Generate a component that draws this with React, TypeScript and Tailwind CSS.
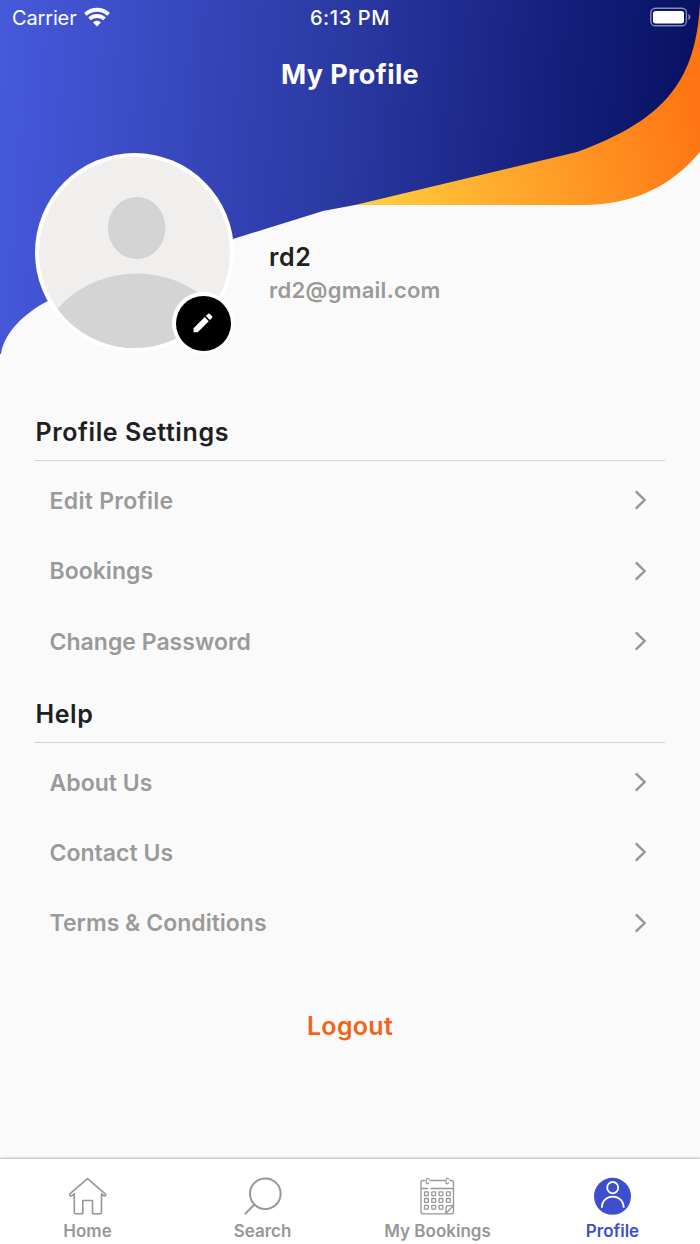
import { ReactNode } from "react";

const settings = ["Edit Profile", "Bookings", "Change Password"];
const help = ["About Us", "Contact Us", "Terms & Conditions"];

function HeaderWave() {
  return (
    <svg className="absolute top-0 left-0" width="700" height="360" viewBox="0 0 700 360" fill="none">
      <defs>
        <linearGradient id="blue" gradientUnits="userSpaceOnUse" x1="0" y1="60" x2="700" y2="110">
          <stop stopColor="#4659db" />
          <stop offset="0.5" stopColor="#2a38a1" />
          <stop offset="0.8" stopColor="#141f7b" />
          <stop offset="1" stopColor="#071162" />
        </linearGradient>
        <linearGradient id="orange" gradientUnits="userSpaceOnUse" x1="370" y1="205" x2="690" y2="120">
          <stop stopColor="#ffcd3e" />
          <stop offset="1" stopColor="#ff7714" />
        </linearGradient>
      </defs>
      <path d="M350 205H583C628 205 668 190 700 152V0H600Z" fill="url(#orange)" />
      <path
        d="M0 0H700V3C696 78 668 119 577 152L355 205L323 211L233 239L48 301C24 313 4 333 1 354H0Z"
        fill="url(#blue)"
      />
    </svg>
  );
}

function StatusBar() {
  return (
    <div className="grid h-9 grid-cols-3 items-center px-3 text-[20px] text-white">
      <div className="flex items-center gap-[8px]">
        <span className="tracking-[-0.15px]">Carrier</span>
        <svg className="-mt-[3px] -ml-px" width="26" height="20" viewBox="0 0 26 20" fill="none" stroke="#fff" strokeWidth="3.8">
          <path d="M1.4 7.4C8 1.2 18 1.2 24.6 7.4" />
          <path d="M5.5 11.9C9.8 8 16.2 8 20.5 11.9" />
          <path d="M13 19.4L9.1 15.4C11.3 13.3 14.7 13.3 16.9 15.4Z" fill="#fff" stroke="none" />
        </svg>
      </div>
      <span className="text-center font-medium tracking-[0.6px]">6:13 PM</span>
      <svg className="-mt-[2px] -mr-[3px] justify-self-end" width="41" height="20" viewBox="0 0 41 20" fill="none">
        <rect x="0.8" y="1.2" width="35.6" height="17.6" rx="4.6" stroke="#fff" strokeOpacity="0.5" strokeWidth="1.4" />
        <rect x="3" y="4" width="31" height="12.4" rx="2.6" fill="#fff" />
        <path d="M38.4 7C41 8 41 12 38.4 13Z" fill="#fff" fillOpacity="0.5" />
      </svg>
    </div>
  );
}

function Avatar() {
  return (
    <div className="relative size-[199px] shrink-0">
      <svg width="199" height="199" viewBox="0 0 199 199">
        <clipPath id="face">
          <circle cx="99.5" cy="99.5" r="95.5" />
        </clipPath>
        <circle cx="99.5" cy="99.5" r="99.5" fill="#fff" />
        <g clipPath="url(#face)">
          <rect width="199" height="199" fill="#f0efee" />
          <ellipse cx="101.7" cy="75" rx="28.8" ry="31" fill="#d4d4d4" />
          <ellipse cx="101.7" cy="220.5" rx="104" ry="100" fill="#d4d4d4" />
        </g>
      </svg>
      <button className="absolute top-[139px] left-[137px] flex size-[62px] items-center justify-center rounded-full bg-white">
        <span className="flex size-[55px] items-center justify-center rounded-full bg-black">
          <svg width="20" height="20" viewBox="0 0 20 20" fill="#fff">
            <path d="M.6 15.2L11.7 4.1L15.8 8.2L4.7 19.3H.6Z" />
            <path d="M12.8 3L15.2 .7Q16 .2 16.7 .8L19.1 3.2Q19.7 4 19.1 4.8L16.9 7.1Z" />
          </svg>
        </span>
      </button>
    </div>
  );
}

function Section({ title, items }: { title: string; items: string[] }) {
  return (
    <section>
      <h2 className="flex h-[58px] items-center border-b border-[#d3d3d3] pt-[2px] pl-[0.5px] text-[25px] font-semibold tracking-[0.6px] text-[#202022]">
        {title}
      </h2>
      <ul className="pt-[5px]">
        {items.map((item) => (
          <li key={item} className="flex h-[70.4px] items-center justify-between pr-[17px] pl-[14.5px]">
            <span className={`text-[23px] font-semibold text-[#9a9a9a] ${item === "Edit Profile" ? "tracking-[0.3px]" : "tracking-[0.02px]"}`}>
              {item}
            </span>
            <svg className="-mt-[2px]" width="14" height="20" viewBox="0 0 14 20" fill="none" stroke="#969696" strokeWidth="2.4">
              <path d="M1.8 1.4L10.6 10L1.8 18.6" />
            </svg>
          </li>
        ))}
      </ul>
    </section>
  );
}

function Tab({ label, active, children }: { label: string; active?: boolean; children: ReactNode }) {
  return (
    <div className={`flex w-[175px] flex-col items-center pt-[18px] ${active ? "text-[#3d4fcc]" : "text-[#979797]"}`}>
      <svg width="38" height="38" viewBox="0.5 -0.3 38 38" fill="none" stroke="currentColor">
        {children}
      </svg>
      <span className="mt-[4px] text-[17px] leading-6 font-semibold">{label}</span>
    </div>
  );
}

export default function App() {
  return (
    <div className="relative flex h-[1244px] w-[700px] flex-col overflow-hidden bg-[#fafafa] font-['Inter','Liberation_Sans',sans-serif]">
      <HeaderWave />
      <div className="relative flex flex-1 flex-col">
        <StatusBar />
        <h1 className="mt-[21px] text-center text-[27px] leading-9 font-bold tracking-[0.4px] text-white">My Profile</h1>
        <div className="mt-[60px] flex gap-[35px] pl-[35px]">
          <Avatar />
          <div className="pt-[87px]">
            <div className="text-[25px] leading-[34px] font-semibold tracking-[0.6px] text-[#202022]">rd2</div>
            <div className="text-[22px] leading-[32px] font-semibold tracking-[0.25px] text-[#9a9a9a]">rd2@gmail.com</div>
          </div>
        </div>
        <main className="mt-[51px] px-[35px]">
          <Section title="Profile Settings" items={settings} />
          <div className="h-[7.6px]" />
          <Section title="Help" items={help} />
        </main>
        <button className="mt-[47.4px] self-center text-[25px] leading-[40px] font-semibold tracking-[0.3px] text-[#f26419]">
          Logout
        </button>
      </div>

      <nav className="relative flex h-[85px] bg-white shadow-[0_-1px_2px_rgba(0,0,0,0.28)]">
        <Tab label="Home">
          <path
            strokeWidth="1.6"
            strokeLinejoin="round"
            d="M19 1.3L1.3 16.5C.4 17.6 1.7 19.2 3 18.5L5.8 16.5V35C5.8 36 6.2 36.4 7 36.4H14.3V23.2H24V36.4H31.8C32.7 36.4 33 36 33 35V16.5L35.2 18.5C36.5 19.2 37.8 17.6 36.7 16.5Z"
          />
        </Tab>
        <Tab label="Search">
          <circle cx="21.8" cy="16.4" r="15.3" strokeWidth="2" />
          <path strokeWidth="2" d="M11.2 27L1.4 36.8" />
        </Tab>
        <Tab label="My Bookings">
          <g strokeWidth="1.3">
            <path d="M6.5 3.2H4.5C3 3.2 2.5 4 2.5 5.2V34.2C2.5 35.7 3.2 36.5 4.5 36.5H27L35 28.2V5.2C35 3.9 34.3 3.2 33 3.2H31M11 3.2H26.5M2.5 11.2H9.5M12 11.2H35M27.5 36.5V31.2C27.5 29.2 28 28.4 30 28.4H35V34.5C35 35.9 34.3 36.5 33 36.5H27" />
            <path d="M10.8 2.2C10.2.6 7.8.6 7.8 2.8V5C7.8 7 10.3 7 10.3 5M30.5 2.2C29.9.6 27.5.6 27.5 2.8V5C27.5 7 30 7 30 5" />
            {[14.5, 21.2, 28].map((y) =>
              [6, 13.3, 20.6, 28].map((x) =>
                y > 27 && x > 27 ? null : <rect key={`${x}-${y}`} x={x} y={y} width="3.8" height="3.8" rx=".4" />
              )
            )}
          </g>
        </Tab>
        <Tab label="Profile" active>
          <circle cx="19" cy="19" r="18.5" fill="currentColor" stroke="none" />
          <ellipse cx="19.2" cy="10.4" rx="5.5" ry="5.7" stroke="#fff" strokeWidth="1.8" />
          <path d="M8.3 30.5C8.5 15.5 30 15.5 30.2 30.5" stroke="#fff" strokeWidth="1.8" />
        </Tab>
      </nav>
    </div>
  );
}
